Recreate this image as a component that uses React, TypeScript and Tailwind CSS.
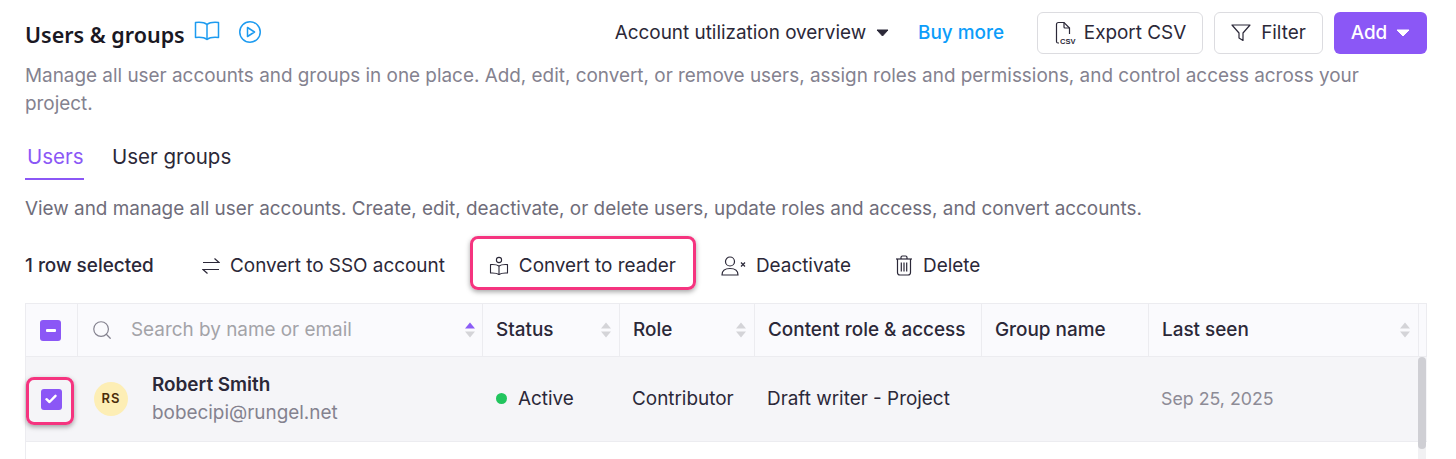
import type { FC, ReactNode } from "react";
import { Search } from "lucide-react";

const SortIcon: FC<{ active?: boolean }> = ({ active }) => (
  <svg width="12" height="16" viewBox="0 0 12 16" className="shrink-0">
    <path d="M6 0.5 L11 6.5 H1 Z" fill={active ? "#8b5cf6" : "#d4d4d8"} />
    <path d="M6 15.5 L11 9.5 H1 Z" fill="#d4d4d8" />
  </svg>
);

const BookIcon: FC = () => (
  <svg width="26" height="20" viewBox="0 0 26 20" fill="none" stroke="#1d9bf0" strokeWidth="1.5" strokeLinejoin="round">
    <path d="M13 3.5 C10.5 1.5 6 1 1.5 1.5 V16.5 C6 16 10.5 16.5 13 18.5 C15.5 16.5 20 16 24.5 16.5 V1.5 C20 1 15.5 1.5 13 3.5 Z" />
    <path d="M13 3.5 V18.5" />
  </svg>
);

const PlayIcon: FC = () => (
  <svg width="24" height="24" viewBox="0 0 24 24" fill="none" stroke="#1d9bf0" strokeWidth="1.5" strokeLinejoin="round">
    <circle cx="12" cy="12" r="10.25" />
    <path d="M9.5 7.5 L16.5 12 L9.5 16.5 Z" />
  </svg>
);

const CsvIcon: FC = () => (
  <svg width="22" height="24" viewBox="0 0 22 24" fill="none" stroke="#2b2838" strokeWidth="1.2">
    <path d="M2.5 17 V3.5 C2.5 2.5 3.1 1.5 4.5 1.5 H10 L15.5 7 V13" />
    <path d="M10 1.5 V6 C10 6.6 10.4 7 11 7 H15.5" />
    <path d="M2.5 17 V20.5 C2.5 21.5 3.1 22 4 22 H5" />
    <text x="6" y="22.5" fontSize="7.5" fontWeight="700" fill="#2b2838" stroke="none" fontFamily="Liberation Sans, sans-serif">
      CSV
    </text>
  </svg>
);

const FilterIcon: FC = () => (
  <svg width="20" height="18" viewBox="0 0 20 18" fill="none" stroke="#2b2838" strokeWidth="1.2" strokeLinejoin="round">
    <path d="M1 1 H19 L12 9 V16.5 L8 14 V9 Z" />
  </svg>
);

const SwapIcon: FC = () => (
  <svg width="18" height="18" viewBox="0 0 18 18" fill="none" stroke="#2b2838" strokeWidth="1.2">
    <path d="M1 5.5 H17 L12.5 1.5" />
    <path d="M17 12.5 H1 L5.5 16.5" />
  </svg>
);

const ReaderIcon: FC = () => (
  <svg width="20" height="20" viewBox="0 0 20 20" fill="none" stroke="#2b2838" strokeWidth="1.1" strokeLinejoin="round">
    <circle cx="10" cy="4" r="2.6" />
    <path d="M10 10 C8 8.6 5 8.4 1.5 8.6 V17 C5 16.8 8 17 10 18.5 C12 17 15 16.8 18.5 17 V8.6 C15 8.4 12 8.6 10 10 Z" />
    <path d="M10 10 V18.5" />
  </svg>
);

const DeactivateIcon: FC = () => (
  <svg width="25" height="20" viewBox="0 0 25 20" fill="none" stroke="#2b2838" strokeWidth="1.2">
    <circle cx="9" cy="5.5" r="4.5" />
    <path d="M1 19 C1 14.5 4.5 12.5 9 12.5 C13.5 12.5 17 14.5 17 19 Z" />
    <path d="M20 6.5 L24 10.5 M24 6.5 L20 10.5" />
  </svg>
);

const TrashIcon: FC = () => (
  <svg width="18" height="21" viewBox="0 0 18 21" fill="none" stroke="#2b2838" strokeWidth="1.2" strokeLinejoin="round">
    <path d="M1 4 H17" />
    <path d="M6 4 V2.5 C6 1.7 6.6 1 7.4 1 H10.6 C11.4 1 12 1.7 12 2.5 V4" />
    <path d="M2.5 4 V17.5 C2.5 19 3.5 20 5 20 H13 C14.5 20 15.5 19 15.5 17.5 V4" />
    <path d="M6.3 7.5 V16.5 M9 7.5 V16.5 M11.7 7.5 V16.5" />
  </svg>
);

const Action: FC<{ icon: ReactNode; label: string }> = ({ icon, label }) => (
  <button type="button" className="flex items-center gap-[10px] whitespace-nowrap text-[18.9px] text-[#2b2838]">
    {icon}
    {label}
  </button>
);

const HeaderCell: FC<{ label?: string; className: string; sort?: boolean }> = ({ label, className, sort }) => (
  <div className={`flex items-center justify-between border-r border-[#ececf0] pl-[13px] pr-[7px] ${className}`}>
    <span className="text-[18.9px] font-medium whitespace-nowrap text-[#2b2838]">{label}</span>
    {sort && <SortIcon />}
  </div>
);

export default function App() {
  return (
    <div className="h-[459px] w-[1456px] overflow-hidden bg-white pt-3 pl-[25px] font-['Inter',sans-serif] text-[#2b2838]">
      <div className="flex w-[1402px] items-center justify-between">
        <div className="flex items-center">
          <h1 className="mt-[4px] font-['Noto_Sans',sans-serif] text-[21.5px] font-semibold text-[#1a1823]">Users &amp; groups</h1>
          <span className="mt-[-4px] ml-[9px]">
            <BookIcon />
          </span>
          <span className="mt-[-2px] ml-[18px]">
            <PlayIcon />
          </span>
        </div>
        <div className="flex items-center">
          <button type="button" className="flex items-center gap-[10px] text-[18.9px]">
            Account utilization overview
            <svg width="13" height="8" viewBox="0 0 13 8">
              <path d="M1 1 H12 L6.5 7 Z" fill="#2b2838" stroke="#2b2838" strokeLinejoin="round" />
            </svg>
          </button>
          <a className="ml-[29px] text-[18.9px] font-medium text-[#0c9dfa]">Buy more</a>
          <button
            type="button"
            className="ml-[33px] flex h-[42px] w-[166px] items-center justify-center gap-[8px] rounded-md border border-[#dcdce0] text-[18.9px]"
          >
            <CsvIcon />
            Export CSV
          </button>
          <button
            type="button"
            className="ml-[11px] flex h-[42px] w-[109px] items-center justify-center gap-[10px] rounded-md border border-[#dcdce0] text-[18.9px]"
          >
            <FilterIcon />
            Filter
          </button>
          <button
            type="button"
            className="ml-[11px] flex h-[42px] w-[93px] items-center justify-center gap-[9px] rounded-md bg-[#8b57f6] text-[18.9px] font-medium text-white"
          >
            Add
            <svg width="14" height="8" viewBox="0 0 14 8">
              <path d="M1 1 H13 L7 7 Z" fill="#fff" stroke="#fff" strokeLinejoin="round" />
            </svg>
          </button>
        </div>
      </div>

      <p className="mt-[8px] w-[1380px] text-[18.9px] leading-[28px] text-[#84828f]">
        Manage all user accounts and groups in one place. Add, edit, convert, or remove users, assign roles and permissions, and control access across your project.
      </p>

      <div className="mt-[23px] flex items-start text-[20.5px]">
        <div className="h-[39px] w-[59px] border-b-2 border-[#8b57f6] pl-[2px] leading-[32px] text-[#8b57f6]">Users</div>
        <div className="ml-[28px] leading-[32px] text-[#2b2838]">User groups</div>
      </div>

      <p className="mt-[15px] text-[18.9px] leading-[28px] text-[#6f6d7a]">
        View and manage all user accounts. Create, edit, deactivate, or delete users, update roles and access, and convert accounts.
      </p>

      <div className="mt-[16px] flex h-[54px] items-center">
        <span className="w-[177px] text-[18.9px] font-medium text-[#2b2838]">1 row selected</span>
        <Action icon={<SwapIcon />} label="Convert to SSO account" />
        <div className="relative ml-[44px] flex h-[54px] items-center">
          <Action icon={<ReaderIcon />} label="Convert to reader" />
          <div className="absolute top-[-3px] right-[-20px] left-[-19px] h-[54px] rounded-lg border-[3px] border-[#f5347f] shadow-[0_2px_5px_rgba(0,0,0,0.35)]" />
        </div>
        <div className="ml-[45px]">
          <Action icon={<DeactivateIcon />} label="Deactivate" />
        </div>
        <div className="ml-[44px]">
          <Action icon={<TrashIcon />} label="Delete" />
        </div>
      </div>

      <div className="mt-[10px] w-[1402px] border-t border-l border-[#ececf0]">
        <div className="flex h-[53px] border-r border-b border-[#ececf0] bg-[#fafafd]">
          <div className="flex w-[52px] items-center justify-center border-r border-[#ececf0] pr-[2px]">
            <span className="flex h-[21px] w-[21px] items-center justify-center rounded-[3px] bg-[#8b57f6]">
              <span className="h-[3px] w-[10px] rounded-[1px] bg-white" />
            </span>
          </div>
          <div className="flex w-[405px] items-center border-r border-[#ececf0] pr-[6px] pl-[13px]">
            <Search size={22} strokeWidth={1.3} color="#84828f" className="shrink-0" />
            <span className="ml-[18px] flex-1 text-[18.9px] text-[#a3a3a8]">Search by name or email</span>
            <SortIcon active />
          </div>
          <HeaderCell label="Status" sort className="w-[137px]" />
          <HeaderCell label="Role" sort className="w-[135px]" />
          <HeaderCell label="Content role & access" className="w-[227px]" />
          <HeaderCell label="Group name" className="w-[167px]" />
          <HeaderCell label="Last seen" sort className="w-[270px]" />
        </div>

        <div className="relative flex h-[85px] items-center border-b border-[#ececf0] bg-[#f5f5f8] text-[18.9px]">
          <div className="flex w-[52px] justify-center pr-[2px]">
            <span className="relative flex h-[21px] w-[21px] items-center justify-center rounded-[3px] bg-[#8b57f6]">
              <svg width="12" height="10" viewBox="0 0 12 10" fill="none" stroke="#fff" strokeWidth="2.4" strokeLinecap="round" strokeLinejoin="round">
                <path d="M1.5 5.2 L4.5 8 L10.5 1.8" />
              </svg>
              <span className="absolute top-[-12px] left-[-15px] h-[48px] w-[48px] rounded-lg border-[3px] border-[#f5347f] shadow-[0_2px_5px_rgba(0,0,0,0.35)]" />
            </span>
          </div>
          <div className="ml-[16px] flex h-[34px] w-[34px] items-center justify-center rounded-full bg-[#fdeeb5] text-[13px] font-semibold tracking-[1px] text-[#4a2c0a]">
            RS
          </div>
          <div className="ml-[24px] w-[344px]">
            <div className="leading-[28px] font-semibold text-[#2b2838]">Robert Smith</div>
            <div className="leading-[28px] text-[#84828f]">bobecipi@rungel.net</div>
          </div>
          <div className="flex w-[136px] items-center">
            <span className="h-[11px] w-[11px] rounded-full bg-[#22c55e]" />
            <span className="ml-[11px]">Active</span>
          </div>
          <div className="w-[135px]">Contributor</div>
          <div className="w-[394px]">Draft writer - Project</div>
          <div className="text-[17.8px] text-[#8d8b96]">Sep 25, 2025</div>
          <div className="absolute top-0 right-[1px] h-[92px] w-[8px] rounded-full bg-[#cfcfd4]" />
        </div>
        <div className="flex justify-end pr-[1px]">
          <div className="h-[18px] w-[8px] bg-[#f1f1f3]" />
        </div>
      </div>
    </div>
  );
}
